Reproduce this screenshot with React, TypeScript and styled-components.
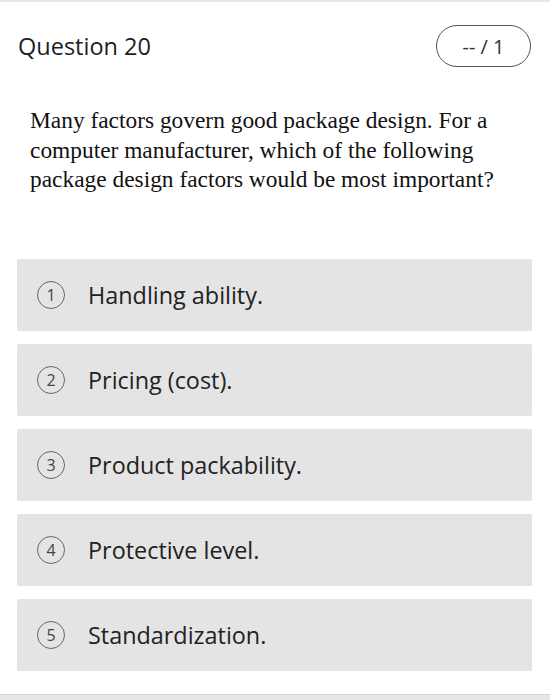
import React from "react";
import styled, { createGlobalStyle } from "styled-components";

const Global = createGlobalStyle`
  html, body { margin: 0; padding: 0; background: #fff; }
  body { width: 550px; height: 700px; overflow: hidden; }
`;

const Page = styled.div`
  width: 550px;
  height: 700px;
  box-sizing: border-box;
  border-top: 2px solid #e6e6e6;
  display: flex;
  flex-direction: column;
  font-family: "Open Sans", "Noto Sans", sans-serif;
  color: #222;
`;

const Header = styled.div`
  display: flex;
  align-items: center;
  justify-content: space-between;
  padding: 23px 18px 0 18px;
  height: 42px;
`;

const Title = styled.h2`
  margin: 0;
  font-size: 23.5px;
  font-weight: 400;
  color: #1e1e1e;
`;

const Score = styled.div`
  width: 95px;
  height: 42px;
  box-sizing: border-box;
  border: 1.5px solid #555;
  border-radius: 21px;
  display: flex;
  align-items: center;
  justify-content: center;
  font-size: 20px;
  color: #333;
  margin-right: 1px;
`;

const Prompt = styled.p`
  margin: 39px 40px 0 30px;
  font-family: "Liberation Serif", "Times New Roman", serif;
  font-size: 23.4px;
  line-height: 29.5px;
  color: #111;
`;

const Options = styled.div`
  display: flex;
  flex-direction: column;
  gap: 13px;
  margin: 64px 18px 0 17px;
  flex: 1;
`;

const Option = styled.div`
  height: 72px;
  background: #e4e4e4;
  border-radius: 2px;
  display: flex;
  align-items: center;
  padding-left: 20px;
  gap: 23px;
`;

const Num = styled.span`
  width: 28px;
  height: 28px;
  box-sizing: border-box;
  border: 1.5px solid #666;
  border-radius: 50%;
  display: flex;
  align-items: center;
  justify-content: center;
  font-size: 16px;
  color: #444;
  flex-shrink: 0;
`;

const Label = styled.span`
  font-size: 23.4px;
  color: #222;
`;

const Footer = styled.div`
  height: 5px;
  border-top: 1px solid #d4d4d4;
  background: #e6e6e6;
`;

const options = [
  "Handling ability.",
  "Pricing (cost).",
  "Product packability.",
  "Protective level.",
  "Standardization.",
];

export default function App() {
  return (
    <>
      <Global />
      <Page>
        <Header>
          <Title>Question 20</Title>
          <Score>-- / 1</Score>
        </Header>
        <Prompt>
          Many factors govern good package design. For a computer manufacturer, which of the
          following package design factors would be most important?
        </Prompt>
        <Options>
          {options.map((o, i) => (
            <Option key={i}>
              <Num>{i + 1}</Num>
              <Label>{o}</Label>
            </Option>
          ))}
        </Options>
        <Footer />
      </Page>
    </>
  );
}
